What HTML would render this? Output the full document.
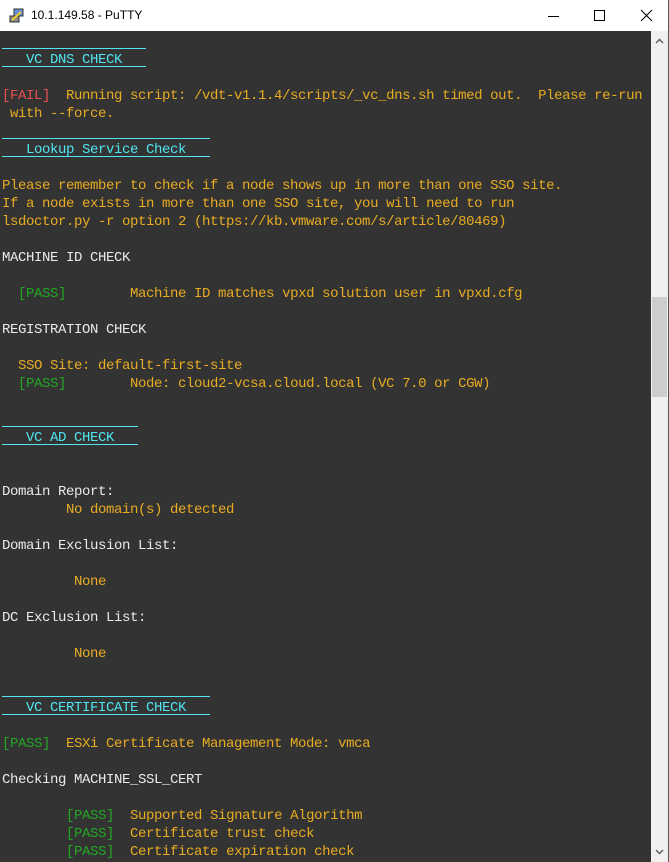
<!DOCTYPE html>
<html><head><meta charset="utf-8"><style>
*{margin:0;padding:0;box-sizing:border-box}
html,body{width:669px;height:862px;overflow:hidden;background:#fff}
#title{position:absolute;left:0;top:0;width:669px;height:31px;background:#fff;font:13px "Liberation Sans",sans-serif;color:#000}
#title .t{position:absolute;left:31px;top:8px;font-size:12px}
#term{position:absolute;left:0;top:31px;width:651px;height:831px;background:#333333;overflow:hidden}
pre{position:absolute;left:2px;top:2px;font:14px/18px "Liberation Mono",monospace;letter-spacing:-0.4px;color:#eaeaea;white-space:pre}
.o{color:#e8ac22}.c{color:#4fe6f0}.g{color:#21a821}.r{color:#ea4f4f}
.u{text-decoration:underline;text-decoration-color:#4fe6f0;text-underline-offset:3px}
.l{display:inline-block;height:16px;border-bottom:1px solid #4fe6f0;vertical-align:top}
#sb{position:absolute;left:651px;top:31px;width:17px;height:831px;background:#f0f0f0}
#thumb{position:absolute;left:652px;top:297px;width:15px;height:100px;background:#cdcdcd}
#edge{position:absolute;left:668px;top:0;width:1px;height:862px;background:#555}
</style></head><body>
<div id="title">
<svg style="position:absolute;left:8px;top:7px" width="18" height="18" viewBox="0 0 18 18">
<rect x="2" y="9" width="9" height="6" fill="#888" stroke="#333"/>
<rect x="6" y="2" width="9" height="7" fill="#6a8fd8" stroke="#333"/>
<path d="M4 13 L13 5" stroke="#f0d020" stroke-width="2"/>
</svg>
<span class="t">10.1.149.58 - PuTTY</span>
<svg style="position:absolute;left:540px;top:8px" width="120" height="16" viewBox="0 0 120 16">
<path d="M8 8.5 H19" stroke="#000" stroke-width="1"/>
<rect x="54.5" y="2.5" width="10" height="10" fill="none" stroke="#000"/>
<path d="M101 2 L112 13 M112 2 L101 13" stroke="#000" stroke-width="1"/>
</svg>
</div>
<div id="term"><pre><span class="l" style="width:144px"></span>
<span class="c u">   VC DNS CHECK   </span>

<span class="r">[FAIL]</span><span class="o">  Running script: /vdt-v1.1.4/scripts/_vc_dns.sh timed out.  Please re-run</span>
<span class="o"> with --force.</span>
<span class="l" style="width:208px"></span>
<span class="c u">   Lookup Service Check   </span>

<span class="o">Please remember to check if a node shows up in more than one SSO site.</span>
<span class="o">If a node exists in more than one SSO site, you will need to run</span>
<span class="o">lsdoctor.py -r option 2 (https://kb.vmware.com/s/article/80469)</span>

MACHINE ID CHECK

  <span class="g">[PASS]</span>        <span class="o">Machine ID matches vpxd solution user in vpxd.cfg</span>

REGISTRATION CHECK

<span class="o">  SSO Site: default-first-site</span>
  <span class="g">[PASS]</span>        <span class="o">Node: cloud2-vcsa.cloud.local (VC 7.0 or CGW)</span>

<span class="l" style="width:136px"></span>
<span class="c u">   VC AD CHECK   </span>


Domain Report:
<span class="o">        No domain(s) detected</span>

Domain Exclusion List:

<span class="o">         None</span>

DC Exclusion List:

<span class="o">         None</span>

<span class="l" style="width:208px"></span>
<span class="c u">   VC CERTIFICATE CHECK   </span>

<span class="g">[PASS]</span><span class="o">  ESXi Certificate Management Mode: vmca</span>

Checking MACHINE_SSL_CERT

        <span class="g">[PASS]</span>  <span class="o">Supported Signature Algorithm</span>
        <span class="g">[PASS]</span>  <span class="o">Certificate trust check</span>
        <span class="g">[PASS]</span>  <span class="o">Certificate expiration check</span>
</pre></div>
<div id="sb">
<svg style="position:absolute;left:4px;top:7px" width="9" height="6"><path d="M1 5 L4.5 1.5 L8 5" stroke="#606060" stroke-width="1.5" fill="none"/></svg>
<svg style="position:absolute;left:4px;top:818px" width="9" height="6"><path d="M1 1 L4.5 4.5 L8 1" stroke="#606060" stroke-width="1.5" fill="none"/></svg>
</div>
<div id="thumb"></div>
<div id="edge"></div>
</body></html>
